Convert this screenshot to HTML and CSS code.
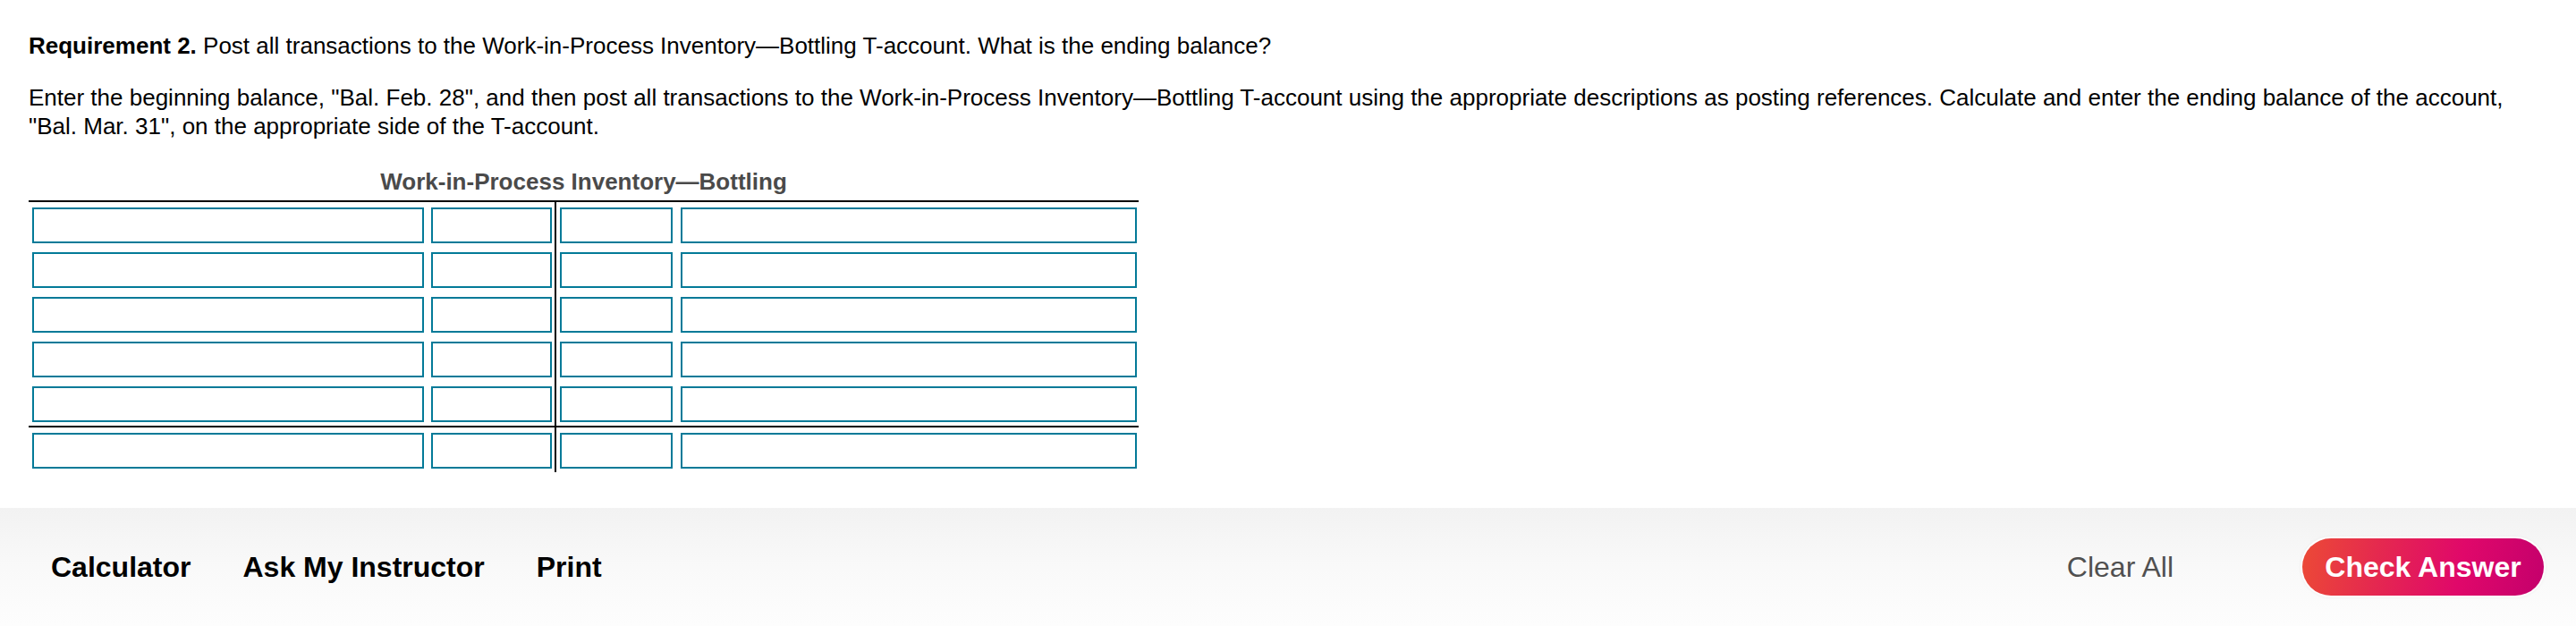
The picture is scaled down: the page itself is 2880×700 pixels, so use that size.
FILE: index.html
```html
<!DOCTYPE html>
<html lang="en">
<head>
<meta charset="utf-8">
<title>Requirement 2</title>
<link rel="stylesheet" href="styles.css">
</head>
<body>
<main class="content">
  <p class="req"><strong>Requirement 2.</strong> Post all transactions to the Work-in-Process Inventory—Bottling T-account. What is the ending balance?</p>
  <p class="instructions">Enter the beginning balance, "Bal. Feb. 28", and then post all transactions to the Work-in-Process Inventory—Bottling T-account using the appropriate descriptions as posting references. Calculate and enter the ending balance of the account, "Bal. Mar. 31", on the appropriate side of the T-account.</p>

  <div class="t-account">
    <div class="t-title">Work-in-Process Inventory—Bottling</div>
    <div class="t-section t-main">
      <div class="t-side t-left">
        <div class="t-row"><input class="f-desc" type="text"><input class="f-amt" type="text"></div>
        <div class="t-row"><input class="f-desc" type="text"><input class="f-amt" type="text"></div>
        <div class="t-row"><input class="f-desc" type="text"><input class="f-amt" type="text"></div>
        <div class="t-row"><input class="f-desc" type="text"><input class="f-amt" type="text"></div>
        <div class="t-row"><input class="f-desc" type="text"><input class="f-amt" type="text"></div>
      </div>
      <div class="t-side t-right">
        <div class="t-row"><input class="f-amt-r" type="text"><input class="f-desc-r" type="text"></div>
        <div class="t-row"><input class="f-amt-r" type="text"><input class="f-desc-r" type="text"></div>
        <div class="t-row"><input class="f-amt-r" type="text"><input class="f-desc-r" type="text"></div>
        <div class="t-row"><input class="f-amt-r" type="text"><input class="f-desc-r" type="text"></div>
        <div class="t-row"><input class="f-amt-r" type="text"><input class="f-desc-r" type="text"></div>
      </div>
    </div>
    <div class="t-section t-total">
      <div class="t-side t-left">
        <div class="t-row"><input class="f-desc" type="text"><input class="f-amt" type="text"></div>
      </div>
      <div class="t-side t-right">
        <div class="t-row"><input class="f-amt-r" type="text"><input class="f-desc-r" type="text"></div>
      </div>
    </div>
  </div>
</main>

<footer class="footer">
  <div class="footer-left">
    <button class="link-btn" type="button">Calculator</button>
    <button class="link-btn" type="button">Ask My Instructor</button>
    <button class="link-btn" type="button">Print</button>
  </div>
  <div class="footer-right">
    <button class="clear-btn" type="button">Clear All</button>
    <button class="check-btn" type="button">Check Answer</button>
  </div>
</footer>
</body>
</html>
```

FILE: styles.css
```css
* { box-sizing: border-box; }

html, body {
  margin: 0;
  padding: 0;
  background: #fff;
  width: 2880px;
  height: 700px;
  overflow: hidden;
}

body {
  font-family: "Liberation Sans", Arial, Helvetica, sans-serif;
  color: #000;
  font-size: 26px;
  line-height: 32px;
}

.content {
  padding: 35px 32px 0 32px;
  height: 568px;
}

.req {
  margin: 0;
}

.req strong {
  font-weight: bold;
}

.instructions {
  margin: 26px 0 0 0;
}

.t-account {
  width: 1241px;
  margin-top: 31px;
}

.t-title {
  text-align: center;
  font-weight: bold;
  font-size: 26px;
  line-height: 30px;
  color: #4a4a4a;
  margin-bottom: 6px;
}

.t-section {
  display: flex;
}

.t-main {
  border-top: 2px solid #000;
}

.t-total {
  border-top: 2px solid #000;
}

.t-side {
  display: flex;
  flex-direction: column;
  gap: 10px;
}

.t-main .t-side {
  padding-top: 6px;
  padding-bottom: 4px;
}

.t-total .t-side {
  padding-top: 6px;
  padding-bottom: 4px;
}

.t-left {
  width: 590px;
  padding-left: 4px;
  padding-right: 3px;
  border-right: 2px solid #000;
}

.t-right {
  width: 651px;
  padding-left: 4px;
  padding-right: 2px;
}

.t-row {
  display: flex;
  height: 40px;
}

.t-row input {
  height: 40px;
  margin: 0;
  padding: 0 6px;
  border: 2px solid #037a98;
  border-radius: 0;
  background: #fff;
  font: inherit;
  outline: none;
}

.f-desc { width: 438px; }
.f-amt { width: 135px; margin-left: 8px !important; }
.f-amt-r { width: 126px; }
.f-desc-r { width: 510px; margin-left: 9px !important; }

.footer {
  height: 132px;
  background: linear-gradient(to bottom, #f2f2f2 0%, #f9f9f9 50%, #fdfdfd 100%);
  display: flex;
  align-items: center;
  justify-content: space-between;
  padding: 0 36px 0 57px;
}

.footer-left {
  display: flex;
  align-items: center;
  gap: 58px;
}

.footer-right {
  display: flex;
  align-items: center;
  gap: 144px;
}

.link-btn,
.clear-btn,
.check-btn {
  font-family: "Liberation Sans", Arial, Helvetica, sans-serif;
  font-size: 32px;
  line-height: 40px;
  border: none;
  background: none;
  padding: 0;
  margin: 0;
  cursor: pointer;
}

.link-btn {
  font-weight: bold;
  color: #000;
}

.clear-btn {
  color: #505050;
  font-weight: normal;
}

.check-btn {
  width: 270px;
  height: 64px;
  border-radius: 32px;
  color: #fff;
  font-weight: bold;
  background: linear-gradient(100deg, #ec4a36 0%, #e52a4e 30%, #e0086a 65%, #c4006c 100%);
  box-shadow: 0 0 0 2px rgba(255, 255, 255, 0.9), 0 0 3px 2px rgba(230, 230, 230, 0.6);
}
```
